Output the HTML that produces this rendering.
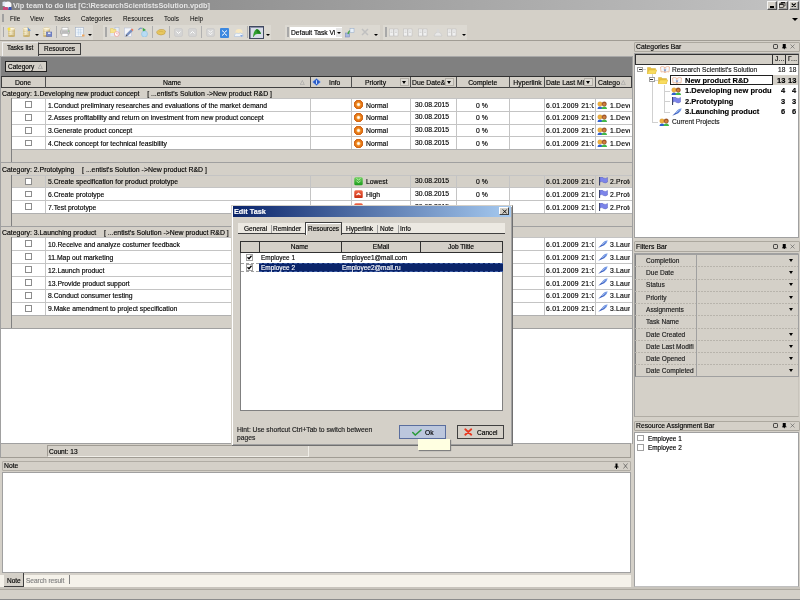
<!DOCTYPE html><html><head><meta charset="utf-8"><style>
html,body{margin:0;padding:0;width:800px;height:600px;overflow:hidden;background:#d4d0c8;}
body{position:relative;font-family:"Liberation Sans",sans-serif;font-size:6.8px;color:#000;}
div{position:absolute;box-sizing:border-box;}
.t{white-space:nowrap;line-height:8px;height:8px;transform:translateY(-4px);will-change:transform;-webkit-text-stroke:0.15px currentColor;}
.cb{width:8px;height:8px;border:1px solid #8a8a8a;background:#fff;}
</style></head><body>
<div style="left:0px;top:0px;width:800px;height:10px;background:linear-gradient(to right,#7f7f7f,#c3c3c3);"></div>
<svg style="position:absolute;left:1px;top:0.5px;" width="11" height="9.5" viewBox="0 0 22 19"><path d="M3 2 Q7 0 11 2 L11 10 L3 10Z" fill="#dde6f4"/><ellipse cx="14" cy="8" rx="7" ry="7" fill="#f6f6fa"/><rect x="4" y="12" width="10" height="7" rx="1" fill="#c84878"/><rect x="15" y="12" width="6" height="7" rx="1" fill="#3850b0"/></svg>
<div class="t" style="left:12.5px;top:5.6px;font-weight:bold;font-size:7.36px;color:#e4e4e4;-webkit-text-stroke:0;">Vip team to do list [C:\ResearchScientistsSolution.vpdb]</div>
<div style="left:767px;top:1px;width:10px;height:8.5px;background:#d4d0c8;border:1px solid;border-color:#f4f4f4 #505050 #505050 #f4f4f4;box-shadow:inset -1px -1px 0 #a0a0a0;"></div>
<div style="left:777.5px;top:1px;width:10px;height:8.5px;background:#d4d0c8;border:1px solid;border-color:#f4f4f4 #505050 #505050 #f4f4f4;box-shadow:inset -1px -1px 0 #a0a0a0;"></div>
<div style="left:788.5px;top:1px;width:10px;height:8.5px;background:#d4d0c8;border:1px solid;border-color:#f4f4f4 #505050 #505050 #f4f4f4;box-shadow:inset -1px -1px 0 #a0a0a0;"></div>
<div style="left:769.8px;top:6px;width:4px;height:1.5px;background:#000;"></div>
<svg style="position:absolute;left:778.8px;top:2.3px;" width="7" height="6" viewBox="0 0 14 12"><path d="M4 1h8v7h-2M4 1v2" stroke="#000" stroke-width="1.2" fill="none"/><path d="M4 0.5h8v2H4z" fill="#000"/><rect x="1" y="4" width="7.5" height="7" fill="#d4d0c8" stroke="#000" stroke-width="1.2"/><rect x="1" y="3.5" width="7.5" height="2" fill="#000"/></svg>
<svg style="position:absolute;left:790.6px;top:2.6px;" width="5.5" height="4.5" viewBox="0 0 11 9"><path d="M1.5 1L9.5 8M9.5 1L1.5 8" stroke="#000" stroke-width="2.2"/></svg>
<div style="left:2px;top:14px;width:1.5px;height:8px;background:#a0a0a0;"></div>
<div class="t" style="left:9.9px;top:19px;font-size:6.4px;-webkit-text-stroke:0;">File</div>
<div class="t" style="left:30px;top:19px;font-size:6.4px;-webkit-text-stroke:0;">View</div>
<div class="t" style="left:54px;top:19px;font-size:6.4px;-webkit-text-stroke:0;">Tasks</div>
<div class="t" style="left:80.5px;top:19px;font-size:6.4px;-webkit-text-stroke:0;">Categories</div>
<div class="t" style="left:122.7px;top:19px;font-size:6.4px;-webkit-text-stroke:0;">Resources</div>
<div class="t" style="left:164.4px;top:19px;font-size:6.4px;-webkit-text-stroke:0;">Tools</div>
<div class="t" style="left:189.7px;top:19px;font-size:6.4px;-webkit-text-stroke:0;">Help</div>
<div style="left:792px;top:18px;width:0;height:0;border-left:3px solid transparent;border-right:3px solid transparent;border-top:3px solid #000;"></div>
<div style="left:1px;top:24.5px;width:92px;height:15px;background:#dcd9d2;"></div>
<div style="left:103px;top:24.5px;width:168px;height:15px;background:#dcd9d2;"></div>
<div style="left:285px;top:24.5px;width:95px;height:15px;background:#dcd9d2;"></div>
<div style="left:383px;top:24.5px;width:84px;height:15px;background:#dcd9d2;"></div>
<div style="left:2.5px;top:27px;width:1.5px;height:10px;background:#a8a8a8;"></div>
<div style="left:105px;top:27px;width:1.5px;height:10px;background:#a8a8a8;"></div>
<div style="left:287px;top:27px;width:1.5px;height:10px;background:#a8a8a8;"></div>
<div style="left:385px;top:27px;width:1.5px;height:10px;background:#a8a8a8;"></div>
<div style="left:56px;top:26px;width:1px;height:12px;background:#b0b0b0;"></div>
<div style="left:152px;top:26px;width:1px;height:12px;background:#b0b0b0;"></div>
<div style="left:169px;top:26px;width:1px;height:12px;background:#b0b0b0;"></div>
<div style="left:201px;top:26px;width:1px;height:12px;background:#b0b0b0;"></div>
<div style="left:247px;top:26px;width:1px;height:12px;background:#b0b0b0;"></div>
<div style="left:35px;top:34.3px;width:0;height:0;border-left:2px solid transparent;border-right:2px solid transparent;border-top:2.5px solid #000;"></div>
<div style="left:88px;top:34.3px;width:0;height:0;border-left:2px solid transparent;border-right:2px solid transparent;border-top:2.5px solid #000;"></div>
<div style="left:266px;top:34.3px;width:0;height:0;border-left:2px solid transparent;border-right:2px solid transparent;border-top:2.5px solid #000;"></div>
<div style="left:374px;top:34.3px;width:0;height:0;border-left:2px solid transparent;border-right:2px solid transparent;border-top:2.5px solid #000;"></div>
<div style="left:461.5px;top:34.3px;width:0;height:0;border-left:2px solid transparent;border-right:2px solid transparent;border-top:2.5px solid #000;"></div>
<svg width="0" height="0" style="position:absolute"><defs><linearGradient id="cyl" x1="0" x2="1"><stop offset="0" stop-color="#d8c890"/><stop offset=".4" stop-color="#fbf5dc"/><stop offset="1" stop-color="#c8b070"/></linearGradient></defs></svg>
<svg style="position:absolute;left:7px;top:26.8px;" width="9" height="10" viewBox="0 0 18 20"><rect x="2" y="3" width="14" height="15" rx="1" fill="url(#cyl)"/><ellipse cx="9" cy="3.5" rx="7" ry="2.5" fill="#fff8e0" stroke="#c8b070" stroke-width=".8"/><path d="M2 8.5 Q9 11 16 8.5 M2 13 Q9 15.5 16 13" stroke="#c8b480" stroke-width="1" fill="none"/><ellipse cx="9" cy="18" rx="7" ry="2" fill="#c8b070"/><circle cx="4" cy="4" r="3" fill="#f8e040"/></svg>
<svg style="position:absolute;left:22px;top:26.8px;" width="9" height="10" viewBox="0 0 18 20"><rect x="2" y="3" width="14" height="15" rx="1" fill="url(#cyl)"/><ellipse cx="9" cy="3.5" rx="7" ry="2.5" fill="#fff8e0" stroke="#c8b070" stroke-width=".8"/><path d="M2 8.5 Q9 11 16 8.5 M2 13 Q9 15.5 16 13" stroke="#c8b480" stroke-width="1" fill="none"/><ellipse cx="9" cy="18" rx="7" ry="2" fill="#c8b070"/><path d="M11 0 L18 7 L12 8 Z" fill="#6890d0"/></svg>
<svg style="position:absolute;left:42px;top:26.8px;" width="10" height="10" viewBox="0 0 20 20"><rect x="2" y="3" width="14" height="15" rx="1" fill="url(#cyl)"/><ellipse cx="9" cy="3.5" rx="7" ry="2.5" fill="#fff8e0" stroke="#c8b070" stroke-width=".8"/><path d="M2 8.5 Q9 11 16 8.5 M2 13 Q9 15.5 16 13" stroke="#c8b480" stroke-width="1" fill="none"/><ellipse cx="9" cy="18" rx="7" ry="2" fill="#c8b070"/><rect x="9" y="10" width="11" height="9" fill="#7888c8" stroke="#5060a8" stroke-width="1"/><rect x="12" y="11" width="5" height="3" fill="#e8ecf8"/></svg>
<svg style="position:absolute;left:59.5px;top:27px;" width="10" height="10" viewBox="0 0 20 20"><rect x="4" y="1" width="12" height="6" fill="#fff" stroke="#a8a8a8" stroke-width="1"/><rect x="1" y="6" width="18" height="8" rx="2" fill="#d8d8d8" stroke="#909090" stroke-width="1"/><rect x="3" y="9" width="14" height="2" fill="#a0a0a0"/><rect x="4" y="13" width="12" height="6" fill="#fff" stroke="#a8a8a8" stroke-width="1"/><circle cx="17" cy="8" r="1" fill="#60c060"/></svg>
<svg style="position:absolute;left:75px;top:27px;" width="10" height="10" viewBox="0 0 20 20"><rect x="1" y="1" width="16" height="18" fill="#f4f8fc" stroke="#98a8c0" stroke-width="1"/><path d="M3 5h12M3 8h12M3 11h12M3 14h12M7 3v14M11 3v14" stroke="#b8d0e8" stroke-width="1"/><rect x="14" y="15" width="5" height="4" fill="#f0a860"/></svg>
<svg style="position:absolute;left:109.6px;top:27px;" width="10" height="10" viewBox="0 0 20 20"><rect x="10" y="1" width="8" height="14" fill="#e8eef8" stroke="#a8b8d0" stroke-width="1"/><path d="M1 3h5l1 2h5v7H1z" fill="#f8e48a" stroke="#e0c860" stroke-width="1"/><rect x="1" y="12" width="8" height="6" fill="#e4e8f0"/><circle cx="13.5" cy="14" r="4.8" fill="#fff" stroke="#f08888" stroke-width="1.2"/><path d="M13.5 11v3h2" stroke="#e07070" stroke-width="1" fill="none"/></svg>
<svg style="position:absolute;left:123.6px;top:27px;" width="10" height="10" viewBox="0 0 20 20"><rect x="1" y="2" width="14" height="17" fill="#f4f6fa" stroke="#b0bcd8" stroke-width="1"/><path d="M4 15 L14 5 L17 8 L7 18 Z" fill="#7890c0" stroke="#5870a8" stroke-width=".6"/><path d="M14 5 L16 3 L19 6 L17 8Z" fill="#f07050"/><path d="M4 15l-1 4 4-1z" fill="#404040"/></svg>
<svg style="position:absolute;left:137.7px;top:27px;" width="10" height="10" viewBox="0 0 20 20"><path d="M1 6 Q4 1 8 3" stroke="#7898c8" stroke-width="2.5" fill="none"/><path d="M9 1 L16 6 L10 10 Z" fill="#40a848"/><circle cx="13" cy="14" r="6" fill="#b8dcf4" stroke="#80b8e0" stroke-width="1"/></svg>
<svg style="position:absolute;left:156px;top:28px;" width="10" height="8" viewBox="0 0 20 16"><path d="M1 8 Q5 2 10 3 Q16 2 19 6 L17 12 Q10 16 3 12 Z" fill="#e8c860" stroke="#b89030" stroke-width="1"/><path d="M5 8 Q10 5 15 8" stroke="#c8a040" stroke-width="1" fill="none"/></svg>
<svg style="position:absolute;left:173.5px;top:28px;" width="9" height="9" viewBox="0 0 18 18"><rect x="1" y="1" width="16" height="16" rx="3" fill="#d4d4d4" stroke="#c4c4c4"/><path d="M5 7 L9 11 L13 7" stroke="#fff" stroke-width="2" fill="none"/></svg>
<svg style="position:absolute;left:187.5px;top:28px;" width="9" height="9" viewBox="0 0 18 18"><rect x="1" y="1" width="16" height="16" rx="3" fill="#d4d4d4" stroke="#c4c4c4"/><path d="M5 11 L9 7 L13 11" stroke="#fff" stroke-width="2" fill="none"/></svg>
<svg style="position:absolute;left:206px;top:28px;" width="9" height="9" viewBox="0 0 18 18"><rect x="1" y="1" width="16" height="16" rx="3" fill="#d4d4d4" stroke="#c4c4c4"/><path d="M5 5 L9 8 L13 5 M5 10 L9 13 L13 10" stroke="#fff" stroke-width="1.8" fill="none"/></svg>
<svg style="position:absolute;left:220px;top:27.5px;" width="9" height="10" viewBox="0 0 18 20"><rect x="0" y="0" width="18" height="20" rx="2" fill="#3c88e0"/><path d="M4 5 L9 9 L14 5 M4 15 L9 11 L14 15" stroke="#fff" stroke-width="2" fill="none"/></svg>
<svg style="position:absolute;left:234px;top:28px;" width="10" height="9" viewBox="0 0 20 18"><ellipse cx="10" cy="8" rx="7" ry="6" fill="#f8e8c0"/><path d="M1 14 Q4 8 9 11 Q14 8 18 13 L18 17 L1 17 Z" fill="#eef4fa" stroke="#a0b8d8" stroke-width="1"/><path d="M12 14 h6 l-3 4z" fill="#88a8e0"/></svg>
<div style="left:249px;top:26.4px;width:14.6px;height:12.2px;background:#d8dce8;border:1px solid #404860;box-shadow:inset 1px 1px 0 #8890a8;"></div>
<svg style="position:absolute;left:251.5px;top:28px;" width="10" height="9" viewBox="0 0 20 18"><path d="M2 18 Q3 6 8 3 Q14 1 18 12 L10 12 Q6 12 3 18 Z" fill="#30a030"/><path d="M8 3 Q14 1 18 12 L11 10 Z" fill="#208020"/></svg>
<div style="left:289.5px;top:27.3px;width:52.5px;height:10.5px;background:#fff;"></div>
<div class="t" style="left:291px;top:32.5px;font-size:6.7px;">Default Task Vi</div>
<div style="left:335.5px;top:28px;width:6px;height:9px;background:#e8e8e8;"></div>
<div style="left:337px;top:32px;width:0;height:0;border-left:2px solid transparent;border-right:2px solid transparent;border-top:2.5px solid #000;"></div>
<svg style="position:absolute;left:345px;top:27.5px;" width="10" height="10" viewBox="0 0 20 20"><rect x="1" y="10" width="8" height="8" fill="#a8b8e0" stroke="#7080b8"/><path d="M6 12 Q8 4 16 4" stroke="#48a848" stroke-width="3" fill="none"/><rect x="10" y="1" width="8" height="8" fill="#e8f0f8" stroke="#90a8c8"/></svg>
<svg style="position:absolute;left:360.5px;top:28px;" width="8" height="8" viewBox="0 0 16 16"><path d="M2 2 L14 14 M14 2 L2 14" stroke="#c0c0c0" stroke-width="3"/></svg>
<svg style="position:absolute;left:389.4px;top:28px;" width="10" height="9" viewBox="0 0 20 18"><rect x="1" y="2" width="8" height="14" fill="#f0f0f0" stroke="#b8b8b8"/><rect x="10" y="2" width="8" height="14" fill="#f0f0f0" stroke="#b8b8b8"/><path d="M3 6h4M3 9h4M12 6h4M12 9h4" stroke="#c0c0c0"/></svg>
<svg style="position:absolute;left:403.4px;top:28px;" width="10" height="9" viewBox="0 0 20 18"><rect x="1" y="2" width="8" height="14" fill="#f0f0f0" stroke="#b8b8b8"/><rect x="10" y="2" width="8" height="14" fill="#f0f0f0" stroke="#b8b8b8"/><path d="M3 6h4M3 9h4M12 6h4M12 9h4" stroke="#c0c0c0"/></svg>
<svg style="position:absolute;left:418px;top:28px;" width="10" height="9" viewBox="0 0 20 18"><rect x="1" y="2" width="8" height="14" fill="#f0f0f0" stroke="#b8b8b8"/><rect x="10" y="2" width="8" height="14" fill="#f0f0f0" stroke="#b8b8b8"/><path d="M3 6h4M3 9h4M12 6h4M12 9h4" stroke="#c0c0c0"/></svg>
<svg style="position:absolute;left:447px;top:28px;" width="10" height="9" viewBox="0 0 20 18"><rect x="1" y="2" width="8" height="14" fill="#f0f0f0" stroke="#b8b8b8"/><rect x="10" y="2" width="8" height="14" fill="#f0f0f0" stroke="#b8b8b8"/><path d="M3 6h4M3 9h4M12 6h4M12 9h4" stroke="#c0c0c0"/></svg>
<svg style="position:absolute;left:433px;top:28px;" width="10" height="9" viewBox="0 0 20 18"><path d="M2 16 Q4 8 10 8 Q16 8 18 16 Z" fill="#e8e8e8" stroke="#c0c0c0"/><path d="M8 2 L12 2 L13 8 L7 8 Z" fill="#d8d8d8"/></svg>
<div style="left:0px;top:40px;width:800px;height:1px;background:#a09c94;"></div>
<div style="left:39.4px;top:43px;width:41.6px;height:11.8px;background:#d4d0c8;border:1px solid #404040;border-left:none;"></div>
<div class="t" style="left:43.9px;top:49.2px;font-size:6.5px;">Resources</div>
<div style="left:2.25px;top:42px;width:37.2px;height:14px;background:#d4d0c8;border-left:1px solid #f0f0f0;border-top:1px solid #e8e8e8;border-right:1px solid #404040;"></div>
<div class="t" style="left:6.7px;top:48px;font-size:6.5px;">Tasks list</div>
<div style="left:0px;top:56px;width:1.2px;height:402px;background:#a0a0a0;"></div>
<div style="left:1px;top:56px;width:630.7px;height:20px;background:#808080;border-top:1px solid #a8a8a8;"></div>
<div style="left:5.4px;top:61px;width:42.1px;height:10.7px;background:#d4d0c8;border:1px solid #202020;"></div>
<div class="t" style="left:7.5px;top:66.5px;font-size:6.5px;">Category</div>
<div class="t" style="left:38px;top:66.3px;font-size:6px;color:#909090;">&#9651;</div>
<div style="left:1px;top:88px;width:630.7px;height:355.3px;background:#fff;"></div>
<div style="left:1px;top:76px;width:630.7px;height:12px;background:#d4d0c8;border:1px solid #404040;border-top-color:#303030;"></div>
<div style="left:44.5px;top:77px;width:1px;height:11px;background:#505050;"></div>
<div style="left:309.9px;top:77px;width:1px;height:11px;background:#505050;"></div>
<div style="left:351.1px;top:77px;width:1px;height:11px;background:#505050;"></div>
<div style="left:410.1px;top:77px;width:1px;height:11px;background:#505050;"></div>
<div style="left:455.5px;top:77px;width:1px;height:11px;background:#505050;"></div>
<div style="left:509.0px;top:77px;width:1px;height:11px;background:#505050;"></div>
<div style="left:544.0px;top:77px;width:1px;height:11px;background:#505050;"></div>
<div style="left:595.0px;top:77px;width:1px;height:11px;background:#505050;"></div>
<div class="t" style="left:1px;top:82.5px;width:44px;text-align:center;">Done</div>
<div class="t" style="left:162.5px;top:82.5px;">Name</div>
<div class="t" style="left:329.4px;top:82.5px;">Info</div>
<div class="t" style="left:364.7px;top:82.5px;">Priority</div>
<div class="t" style="left:411.8px;top:82.5px;">Due Date&amp;</div>
<div class="t" style="left:456px;top:82.5px;width:53.5px;text-align:center;">Complete</div>
<div class="t" style="left:509.5px;top:82.5px;width:35.0px;text-align:center;">Hyperlink</div>
<div class="t" style="left:545.7px;top:82.5px;">Date Last Mi</div>
<div class="t" style="left:597.5px;top:82.5px;">Catego</div>
<div style="left:399.5px;top:78px;width:9px;height:7.6px;background:#dcd9d2;border:1px solid #b4b0a8;"></div>
<div style="left:401.5px;top:80.8px;width:0;height:0;border-left:2.5px solid transparent;border-right:2.5px solid transparent;border-top:3px solid #000;"></div>
<div style="left:445.4px;top:78px;width:9px;height:7.6px;background:#dcd9d2;border:1px solid #b4b0a8;"></div>
<div style="left:447.4px;top:80.8px;width:0;height:0;border-left:2.5px solid transparent;border-right:2.5px solid transparent;border-top:3px solid #000;"></div>
<div style="left:584px;top:78px;width:9px;height:7.6px;background:#dcd9d2;border:1px solid #b4b0a8;"></div>
<div style="left:586px;top:80.8px;width:0;height:0;border-left:2.5px solid transparent;border-right:2.5px solid transparent;border-top:3px solid #000;"></div>
<div class="t" style="left:300px;top:82px;font-size:6px;color:#a0a0a0;">&#9651;</div>
<div class="t" style="left:621px;top:82px;font-size:6px;color:#a0a0a0;">&#9651;</div>
<svg style="position:absolute;left:312.3px;top:78.4px;" width="9" height="8" viewBox="0 0 18 16"><path d="M9 0.5 L17.5 8 L9 15.5 L0.5 8Z" fill="#2a5cc8" stroke="#c8dcf8" stroke-width="1"/><rect x="8" y="4" width="2" height="8" rx="1" fill="#c8dcff"/></svg>
<div style="left:1px;top:87.8px;width:630.7px;height:10.200000000000003px;background:#d4d0c8;"></div>
<div class="t" style="left:2.25px;top:93.9px;font-size:6.9px;">Category: 1.Developing new product concept &nbsp;&nbsp; [ ...entist's Solution -&gt;New product R&amp;D ]</div>
<div style="left:12px;top:98.0px;width:619.7px;height:12.825000000000003px;background:#fff;border-top:1px solid #c4c4c4;"></div>
<div style="left:44.5px;top:98.0px;width:1px;height:12.825000000000003px;background:#c4c4c4;"></div>
<div style="left:309.9px;top:98.0px;width:1px;height:12.825000000000003px;background:#c4c4c4;"></div>
<div style="left:351.1px;top:98.0px;width:1px;height:12.825000000000003px;background:#c4c4c4;"></div>
<div style="left:410.1px;top:98.0px;width:1px;height:12.825000000000003px;background:#c4c4c4;"></div>
<div style="left:455.5px;top:98.0px;width:1px;height:12.825000000000003px;background:#c4c4c4;"></div>
<div style="left:509.0px;top:98.0px;width:1px;height:12.825000000000003px;background:#c4c4c4;"></div>
<div style="left:544.0px;top:98.0px;width:1px;height:12.825000000000003px;background:#c4c4c4;"></div>
<div style="left:595.0px;top:98.0px;width:1px;height:12.825000000000003px;background:#c4c4c4;"></div>
<div style="left:25px;top:101.1125px;width:6.9px;height:6.9px;background:#fff;border:1px solid #8c8c8c;"></div>
<div class="t" style="left:47.5px;top:105.51249999999999px;">1.Conduct preliminary researches and evaluations of the market demand</div>
<div style="left:354px;top:100.4125px;width:9px;height:9px;background:radial-gradient(circle,#fff 0,#ffe8c8 18%,#f08a20 35%,#d06010 70%,transparent 72%);"></div>
<div class="t" style="left:366px;top:105.51249999999999px;">Normal</div>
<div class="t" style="left:415px;top:104.51249999999999px;">30.08.2015</div>
<div class="t" style="left:476px;top:105.51249999999999px;">0 %</div>
<div class="t" style="left:546px;top:105.51249999999999px;width:47.5px;overflow:hidden;letter-spacing:0.3px;">6.01.2009 21:05</div>
<svg style="position:absolute;left:597px;top:100.9125px;" width="11" height="8" viewBox="0 0 22 16"><path d="M1 16 Q1 11 6 11 Q11 11 11 16Z" fill="#2f5fd0"/><circle cx="6" cy="6" r="4.6" fill="#eeb040" stroke="#c88820" stroke-width=".6"/><path d="M9 16 Q9 11 14.5 11 Q20 11 20 16Z" fill="#40b848"/><circle cx="14.5" cy="6" r="4.6" fill="#a85a28" stroke="#703010" stroke-width=".6"/><circle cx="14.5" cy="6.8" r="2.6" fill="#d08040"/></svg>
<div class="t" style="left:610px;top:105.51249999999999px;width:20px;overflow:hidden;letter-spacing:0.2px;">1.Developing</div>
<div style="left:12px;top:110.825px;width:619.7px;height:12.825000000000003px;background:#fff;border-top:1px solid #c4c4c4;"></div>
<div style="left:44.5px;top:110.825px;width:1px;height:12.825000000000003px;background:#c4c4c4;"></div>
<div style="left:309.9px;top:110.825px;width:1px;height:12.825000000000003px;background:#c4c4c4;"></div>
<div style="left:351.1px;top:110.825px;width:1px;height:12.825000000000003px;background:#c4c4c4;"></div>
<div style="left:410.1px;top:110.825px;width:1px;height:12.825000000000003px;background:#c4c4c4;"></div>
<div style="left:455.5px;top:110.825px;width:1px;height:12.825000000000003px;background:#c4c4c4;"></div>
<div style="left:509.0px;top:110.825px;width:1px;height:12.825000000000003px;background:#c4c4c4;"></div>
<div style="left:544.0px;top:110.825px;width:1px;height:12.825000000000003px;background:#c4c4c4;"></div>
<div style="left:595.0px;top:110.825px;width:1px;height:12.825000000000003px;background:#c4c4c4;"></div>
<div style="left:25px;top:113.93750000000001px;width:6.9px;height:6.9px;background:#fff;border:1px solid #8c8c8c;"></div>
<div class="t" style="left:47.5px;top:118.3375px;">2.Asses profitability and return on investment from new product concept</div>
<div style="left:354px;top:113.23750000000001px;width:9px;height:9px;background:radial-gradient(circle,#fff 0,#ffe8c8 18%,#f08a20 35%,#d06010 70%,transparent 72%);"></div>
<div class="t" style="left:366px;top:118.3375px;">Normal</div>
<div class="t" style="left:415px;top:117.3375px;">30.08.2015</div>
<div class="t" style="left:476px;top:118.3375px;">0 %</div>
<div class="t" style="left:546px;top:118.3375px;width:47.5px;overflow:hidden;letter-spacing:0.3px;">6.01.2009 21:05</div>
<svg style="position:absolute;left:597px;top:113.73750000000001px;" width="11" height="8" viewBox="0 0 22 16"><path d="M1 16 Q1 11 6 11 Q11 11 11 16Z" fill="#2f5fd0"/><circle cx="6" cy="6" r="4.6" fill="#eeb040" stroke="#c88820" stroke-width=".6"/><path d="M9 16 Q9 11 14.5 11 Q20 11 20 16Z" fill="#40b848"/><circle cx="14.5" cy="6" r="4.6" fill="#a85a28" stroke="#703010" stroke-width=".6"/><circle cx="14.5" cy="6.8" r="2.6" fill="#d08040"/></svg>
<div class="t" style="left:610px;top:118.3375px;width:20px;overflow:hidden;letter-spacing:0.2px;">1.Developing</div>
<div style="left:12px;top:123.65px;width:619.7px;height:12.825000000000003px;background:#fff;border-top:1px solid #c4c4c4;"></div>
<div style="left:44.5px;top:123.65px;width:1px;height:12.825000000000003px;background:#c4c4c4;"></div>
<div style="left:309.9px;top:123.65px;width:1px;height:12.825000000000003px;background:#c4c4c4;"></div>
<div style="left:351.1px;top:123.65px;width:1px;height:12.825000000000003px;background:#c4c4c4;"></div>
<div style="left:410.1px;top:123.65px;width:1px;height:12.825000000000003px;background:#c4c4c4;"></div>
<div style="left:455.5px;top:123.65px;width:1px;height:12.825000000000003px;background:#c4c4c4;"></div>
<div style="left:509.0px;top:123.65px;width:1px;height:12.825000000000003px;background:#c4c4c4;"></div>
<div style="left:544.0px;top:123.65px;width:1px;height:12.825000000000003px;background:#c4c4c4;"></div>
<div style="left:595.0px;top:123.65px;width:1px;height:12.825000000000003px;background:#c4c4c4;"></div>
<div style="left:25px;top:126.7625px;width:6.9px;height:6.9px;background:#fff;border:1px solid #8c8c8c;"></div>
<div class="t" style="left:47.5px;top:131.1625px;">3.Generate product concept</div>
<div style="left:354px;top:126.0625px;width:9px;height:9px;background:radial-gradient(circle,#fff 0,#ffe8c8 18%,#f08a20 35%,#d06010 70%,transparent 72%);"></div>
<div class="t" style="left:366px;top:131.1625px;">Normal</div>
<div class="t" style="left:415px;top:130.1625px;">30.08.2015</div>
<div class="t" style="left:476px;top:131.1625px;">0 %</div>
<div class="t" style="left:546px;top:131.1625px;width:47.5px;overflow:hidden;letter-spacing:0.3px;">6.01.2009 21:05</div>
<svg style="position:absolute;left:597px;top:126.5625px;" width="11" height="8" viewBox="0 0 22 16"><path d="M1 16 Q1 11 6 11 Q11 11 11 16Z" fill="#2f5fd0"/><circle cx="6" cy="6" r="4.6" fill="#eeb040" stroke="#c88820" stroke-width=".6"/><path d="M9 16 Q9 11 14.5 11 Q20 11 20 16Z" fill="#40b848"/><circle cx="14.5" cy="6" r="4.6" fill="#a85a28" stroke="#703010" stroke-width=".6"/><circle cx="14.5" cy="6.8" r="2.6" fill="#d08040"/></svg>
<div class="t" style="left:610px;top:131.1625px;width:20px;overflow:hidden;letter-spacing:0.2px;">1.Developing</div>
<div style="left:12px;top:136.47500000000002px;width:619.7px;height:12.825000000000003px;background:#fff;border-top:1px solid #c4c4c4;"></div>
<div style="left:44.5px;top:136.47500000000002px;width:1px;height:12.825000000000003px;background:#c4c4c4;"></div>
<div style="left:309.9px;top:136.47500000000002px;width:1px;height:12.825000000000003px;background:#c4c4c4;"></div>
<div style="left:351.1px;top:136.47500000000002px;width:1px;height:12.825000000000003px;background:#c4c4c4;"></div>
<div style="left:410.1px;top:136.47500000000002px;width:1px;height:12.825000000000003px;background:#c4c4c4;"></div>
<div style="left:455.5px;top:136.47500000000002px;width:1px;height:12.825000000000003px;background:#c4c4c4;"></div>
<div style="left:509.0px;top:136.47500000000002px;width:1px;height:12.825000000000003px;background:#c4c4c4;"></div>
<div style="left:544.0px;top:136.47500000000002px;width:1px;height:12.825000000000003px;background:#c4c4c4;"></div>
<div style="left:595.0px;top:136.47500000000002px;width:1px;height:12.825000000000003px;background:#c4c4c4;"></div>
<div style="left:25px;top:139.5875px;width:6.9px;height:6.9px;background:#fff;border:1px solid #8c8c8c;"></div>
<div class="t" style="left:47.5px;top:143.9875px;">4.Check concept for technical feasibility</div>
<div style="left:354px;top:138.88750000000002px;width:9px;height:9px;background:radial-gradient(circle,#fff 0,#ffe8c8 18%,#f08a20 35%,#d06010 70%,transparent 72%);"></div>
<div class="t" style="left:366px;top:143.9875px;">Normal</div>
<div class="t" style="left:415px;top:142.9875px;">30.08.2015</div>
<div class="t" style="left:476px;top:143.9875px;">0 %</div>
<div class="t" style="left:546px;top:143.9875px;width:47.5px;overflow:hidden;letter-spacing:0.3px;">6.01.2009 21:05</div>
<svg style="position:absolute;left:597px;top:139.38750000000002px;" width="11" height="8" viewBox="0 0 22 16"><path d="M1 16 Q1 11 6 11 Q11 11 11 16Z" fill="#2f5fd0"/><circle cx="6" cy="6" r="4.6" fill="#eeb040" stroke="#c88820" stroke-width=".6"/><path d="M9 16 Q9 11 14.5 11 Q20 11 20 16Z" fill="#40b848"/><circle cx="14.5" cy="6" r="4.6" fill="#a85a28" stroke="#703010" stroke-width=".6"/><circle cx="14.5" cy="6.8" r="2.6" fill="#d08040"/></svg>
<div class="t" style="left:610px;top:143.9875px;width:20px;overflow:hidden;letter-spacing:0.2px;">1.Developing</div>
<div style="left:1px;top:149.3px;width:630.7px;height:14.0px;background:#d4d0c8;border-top:1px solid #b0b0b0;border-bottom:1px solid #a0a0a0;"></div>
<div style="left:11.2px;top:98.0px;width:1px;height:64.30000000000001px;background:#808080;"></div>
<div style="left:1px;top:98.0px;width:10.2px;height:64.30000000000001px;background:#d4d0c8;"></div>
<div style="left:1px;top:163.3px;width:630.7px;height:11.399999999999977px;background:#d4d0c8;"></div>
<div class="t" style="left:2.25px;top:170.0px;font-size:6.9px;">Category: 2.Prototyping &nbsp;&nbsp; [ ...entist's Solution -&gt;New product R&amp;D ]</div>
<div style="left:12px;top:174.7px;width:619.7px;height:12.766666666666671px;background:#d4d0c8;border-top:1px solid #c4c4c4;"></div>
<div style="left:44.5px;top:174.7px;width:1px;height:12.766666666666671px;background:#c4c4c4;"></div>
<div style="left:309.9px;top:174.7px;width:1px;height:12.766666666666671px;background:#c4c4c4;"></div>
<div style="left:351.1px;top:174.7px;width:1px;height:12.766666666666671px;background:#c4c4c4;"></div>
<div style="left:410.1px;top:174.7px;width:1px;height:12.766666666666671px;background:#c4c4c4;"></div>
<div style="left:455.5px;top:174.7px;width:1px;height:12.766666666666671px;background:#c4c4c4;"></div>
<div style="left:509.0px;top:174.7px;width:1px;height:12.766666666666671px;background:#c4c4c4;"></div>
<div style="left:544.0px;top:174.7px;width:1px;height:12.766666666666671px;background:#c4c4c4;"></div>
<div style="left:595.0px;top:174.7px;width:1px;height:12.766666666666671px;background:#c4c4c4;"></div>
<div style="left:25px;top:177.7833333333333px;width:6.9px;height:6.9px;background:#fff;border:1px solid #8c8c8c;"></div>
<div class="t" style="left:47.5px;top:182.1833333333333px;">5.Create specification for product prototype</div>
<svg style="position:absolute;left:354px;top:177.08333333333331px;" width="9" height="8.5" viewBox="0 0 18 17"><defs><linearGradient id="gl" x1="0" y1="0" x2="0" y2="1"><stop offset="0" stop-color="#70d060"/><stop offset="1" stop-color="#1c9c1c"/></linearGradient></defs><rect x="0.5" y="0.5" width="17" height="16" rx="3" fill="url(#gl)"/><path d="M5 3 L9 6 L13 3 M5 8 L9 11 L13 8" stroke="#c8f8b8" stroke-width="1.8" fill="none"/></svg>
<div class="t" style="left:366px;top:182.1833333333333px;">Lowest</div>
<div class="t" style="left:415px;top:181.1833333333333px;">30.08.2015</div>
<div class="t" style="left:476px;top:182.1833333333333px;">0 %</div>
<div class="t" style="left:546px;top:182.1833333333333px;width:47.5px;overflow:hidden;letter-spacing:0.3px;">6.01.2009 21:05</div>
<svg style="position:absolute;left:598.5px;top:177.08333333333331px;" width="9" height="8.5" viewBox="0 0 18 17"><rect x="0" y="0" width="2.2" height="17" fill="#3c4468"/><path d="M2 1 Q6 -1 9 2 Q13 4 17 1 V10 Q13 13 9 11 Q6 8 2 10 Z" fill="#7c84ea" stroke="#4850b0" stroke-width=".8"/></svg>
<div class="t" style="left:610px;top:182.1833333333333px;width:20px;overflow:hidden;letter-spacing:0.2px;">2.Prototyping</div>
<div style="left:12px;top:187.46666666666667px;width:619.7px;height:12.766666666666671px;background:#fff;border-top:1px solid #c4c4c4;"></div>
<div style="left:44.5px;top:187.46666666666667px;width:1px;height:12.766666666666671px;background:#c4c4c4;"></div>
<div style="left:309.9px;top:187.46666666666667px;width:1px;height:12.766666666666671px;background:#c4c4c4;"></div>
<div style="left:351.1px;top:187.46666666666667px;width:1px;height:12.766666666666671px;background:#c4c4c4;"></div>
<div style="left:410.1px;top:187.46666666666667px;width:1px;height:12.766666666666671px;background:#c4c4c4;"></div>
<div style="left:455.5px;top:187.46666666666667px;width:1px;height:12.766666666666671px;background:#c4c4c4;"></div>
<div style="left:509.0px;top:187.46666666666667px;width:1px;height:12.766666666666671px;background:#c4c4c4;"></div>
<div style="left:544.0px;top:187.46666666666667px;width:1px;height:12.766666666666671px;background:#c4c4c4;"></div>
<div style="left:595.0px;top:187.46666666666667px;width:1px;height:12.766666666666671px;background:#c4c4c4;"></div>
<div style="left:25px;top:190.54999999999998px;width:6.9px;height:6.9px;background:#fff;border:1px solid #8c8c8c;"></div>
<div class="t" style="left:47.5px;top:194.95px;">6.Create prototype</div>
<svg style="position:absolute;left:354px;top:189.85px;" width="9" height="8.5" viewBox="0 0 18 17"><defs><linearGradient id="rh" x1="0" y1="0" x2="0" y2="1"><stop offset="0" stop-color="#f06848"/><stop offset="1" stop-color="#c82c10"/></linearGradient></defs><rect x="0.5" y="0.5" width="17" height="16" rx="3" fill="url(#rh)"/><path d="M5 10 L9 6.5 L13 10" stroke="#fff" stroke-width="2.2" fill="none"/></svg>
<div class="t" style="left:366px;top:194.95px;">High</div>
<div class="t" style="left:415px;top:193.95px;">30.08.2015</div>
<div class="t" style="left:476px;top:194.95px;">0 %</div>
<div class="t" style="left:546px;top:194.95px;width:47.5px;overflow:hidden;letter-spacing:0.3px;">6.01.2009 21:05</div>
<svg style="position:absolute;left:598.5px;top:189.85px;" width="9" height="8.5" viewBox="0 0 18 17"><rect x="0" y="0" width="2.2" height="17" fill="#3c4468"/><path d="M2 1 Q6 -1 9 2 Q13 4 17 1 V10 Q13 13 9 11 Q6 8 2 10 Z" fill="#7c84ea" stroke="#4850b0" stroke-width=".8"/></svg>
<div class="t" style="left:610px;top:194.95px;width:20px;overflow:hidden;letter-spacing:0.2px;">2.Prototyping</div>
<div style="left:12px;top:200.23333333333332px;width:619.7px;height:12.766666666666671px;background:#fff;border-top:1px solid #c4c4c4;"></div>
<div style="left:44.5px;top:200.23333333333332px;width:1px;height:12.766666666666671px;background:#c4c4c4;"></div>
<div style="left:309.9px;top:200.23333333333332px;width:1px;height:12.766666666666671px;background:#c4c4c4;"></div>
<div style="left:351.1px;top:200.23333333333332px;width:1px;height:12.766666666666671px;background:#c4c4c4;"></div>
<div style="left:410.1px;top:200.23333333333332px;width:1px;height:12.766666666666671px;background:#c4c4c4;"></div>
<div style="left:455.5px;top:200.23333333333332px;width:1px;height:12.766666666666671px;background:#c4c4c4;"></div>
<div style="left:509.0px;top:200.23333333333332px;width:1px;height:12.766666666666671px;background:#c4c4c4;"></div>
<div style="left:544.0px;top:200.23333333333332px;width:1px;height:12.766666666666671px;background:#c4c4c4;"></div>
<div style="left:595.0px;top:200.23333333333332px;width:1px;height:12.766666666666671px;background:#c4c4c4;"></div>
<div style="left:25px;top:203.31666666666663px;width:6.9px;height:6.9px;background:#fff;border:1px solid #8c8c8c;"></div>
<div class="t" style="left:47.5px;top:207.71666666666664px;">7.Test prototype</div>
<svg style="position:absolute;left:354px;top:202.61666666666665px;" width="9" height="8.5" viewBox="0 0 18 17"><defs><linearGradient id="rh" x1="0" y1="0" x2="0" y2="1"><stop offset="0" stop-color="#f06848"/><stop offset="1" stop-color="#c82c10"/></linearGradient></defs><rect x="0.5" y="0.5" width="17" height="16" rx="3" fill="url(#rh)"/><path d="M5 10 L9 6.5 L13 10" stroke="#fff" stroke-width="2.2" fill="none"/></svg>
<div class="t" style="left:366px;top:207.71666666666664px;">High</div>
<div class="t" style="left:415px;top:206.71666666666664px;">30.08.2015</div>
<div class="t" style="left:476px;top:207.71666666666664px;">0 %</div>
<div class="t" style="left:546px;top:207.71666666666664px;width:47.5px;overflow:hidden;letter-spacing:0.3px;">6.01.2009 21:05</div>
<svg style="position:absolute;left:598.5px;top:202.61666666666665px;" width="9" height="8.5" viewBox="0 0 18 17"><rect x="0" y="0" width="2.2" height="17" fill="#3c4468"/><path d="M2 1 Q6 -1 9 2 Q13 4 17 1 V10 Q13 13 9 11 Q6 8 2 10 Z" fill="#7c84ea" stroke="#4850b0" stroke-width=".8"/></svg>
<div class="t" style="left:610px;top:207.71666666666664px;width:20px;overflow:hidden;letter-spacing:0.2px;">2.Prototyping</div>
<div style="left:1px;top:213.0px;width:630.7px;height:13.699999999999989px;background:#d4d0c8;border-top:1px solid #b0b0b0;border-bottom:1px solid #a0a0a0;"></div>
<div style="left:11.2px;top:174.7px;width:1px;height:51.0px;background:#808080;"></div>
<div style="left:1px;top:174.7px;width:10.2px;height:51.0px;background:#d4d0c8;"></div>
<div style="left:1px;top:226.7px;width:630.7px;height:10.600000000000023px;background:#d4d0c8;"></div>
<div class="t" style="left:2.25px;top:233.0px;font-size:6.9px;">Category: 3.Launching product &nbsp;&nbsp; [ ...entist's Solution -&gt;New product R&amp;D ]</div>
<div style="left:12px;top:237.3px;width:619.7px;height:12.899999999999997px;background:#fff;border-top:1px solid #c4c4c4;"></div>
<div style="left:44.5px;top:237.3px;width:1px;height:12.899999999999997px;background:#c4c4c4;"></div>
<div style="left:309.9px;top:237.3px;width:1px;height:12.899999999999997px;background:#c4c4c4;"></div>
<div style="left:351.1px;top:237.3px;width:1px;height:12.899999999999997px;background:#c4c4c4;"></div>
<div style="left:410.1px;top:237.3px;width:1px;height:12.899999999999997px;background:#c4c4c4;"></div>
<div style="left:455.5px;top:237.3px;width:1px;height:12.899999999999997px;background:#c4c4c4;"></div>
<div style="left:509.0px;top:237.3px;width:1px;height:12.899999999999997px;background:#c4c4c4;"></div>
<div style="left:544.0px;top:237.3px;width:1px;height:12.899999999999997px;background:#c4c4c4;"></div>
<div style="left:595.0px;top:237.3px;width:1px;height:12.899999999999997px;background:#c4c4c4;"></div>
<div style="left:25px;top:240.45px;width:6.9px;height:6.9px;background:#fff;border:1px solid #8c8c8c;"></div>
<div class="t" style="left:47.5px;top:244.85px;">10.Receive and analyze costumer feedback</div>
<div style="left:354px;top:239.75px;width:9px;height:9px;background:radial-gradient(circle,#fff 0,#ffe8c8 18%,#f08a20 35%,#d06010 70%,transparent 72%);"></div>
<div class="t" style="left:366px;top:244.85px;">Normal</div>
<div class="t" style="left:415px;top:243.85px;">30.08.2015</div>
<div class="t" style="left:476px;top:244.85px;">0 %</div>
<div class="t" style="left:546px;top:244.85px;width:47.5px;overflow:hidden;letter-spacing:0.3px;">6.01.2009 21:05</div>
<svg style="position:absolute;left:597.5px;top:239.75px;" width="10" height="8" viewBox="0 0 20 16"><defs><linearGradient id="rk" x1="0" y1="1" x2="1" y2="0"><stop offset="0" stop-color="#2040a8"/><stop offset=".6" stop-color="#5880d8"/><stop offset="1" stop-color="#8fb0f0"/></linearGradient></defs><path d="M0.5 15.5 L8 8 Q11 2 19.5 0.5 Q18.5 7 12.5 10.5 Z" fill="url(#rk)"/><path d="M8.5 9.5 L13 4.5" stroke="#e8f0ff" stroke-width="1.2"/></svg>
<div class="t" style="left:610px;top:244.85px;width:20px;overflow:hidden;letter-spacing:0.2px;">3.Launching</div>
<div style="left:12px;top:250.20000000000002px;width:619.7px;height:12.899999999999997px;background:#fff;border-top:1px solid #c4c4c4;"></div>
<div style="left:44.5px;top:250.20000000000002px;width:1px;height:12.899999999999997px;background:#c4c4c4;"></div>
<div style="left:309.9px;top:250.20000000000002px;width:1px;height:12.899999999999997px;background:#c4c4c4;"></div>
<div style="left:351.1px;top:250.20000000000002px;width:1px;height:12.899999999999997px;background:#c4c4c4;"></div>
<div style="left:410.1px;top:250.20000000000002px;width:1px;height:12.899999999999997px;background:#c4c4c4;"></div>
<div style="left:455.5px;top:250.20000000000002px;width:1px;height:12.899999999999997px;background:#c4c4c4;"></div>
<div style="left:509.0px;top:250.20000000000002px;width:1px;height:12.899999999999997px;background:#c4c4c4;"></div>
<div style="left:544.0px;top:250.20000000000002px;width:1px;height:12.899999999999997px;background:#c4c4c4;"></div>
<div style="left:595.0px;top:250.20000000000002px;width:1px;height:12.899999999999997px;background:#c4c4c4;"></div>
<div style="left:25px;top:253.35000000000002px;width:6.9px;height:6.9px;background:#fff;border:1px solid #8c8c8c;"></div>
<div class="t" style="left:47.5px;top:257.75000000000006px;">11.Map out marketing</div>
<div style="left:354px;top:252.65000000000003px;width:9px;height:9px;background:radial-gradient(circle,#fff 0,#ffe8c8 18%,#f08a20 35%,#d06010 70%,transparent 72%);"></div>
<div class="t" style="left:366px;top:257.75000000000006px;">Normal</div>
<div class="t" style="left:415px;top:256.75000000000006px;">30.08.2015</div>
<div class="t" style="left:476px;top:257.75000000000006px;">0 %</div>
<div class="t" style="left:546px;top:257.75000000000006px;width:47.5px;overflow:hidden;letter-spacing:0.3px;">6.01.2009 21:05</div>
<svg style="position:absolute;left:597.5px;top:252.65000000000003px;" width="10" height="8" viewBox="0 0 20 16"><defs><linearGradient id="rk" x1="0" y1="1" x2="1" y2="0"><stop offset="0" stop-color="#2040a8"/><stop offset=".6" stop-color="#5880d8"/><stop offset="1" stop-color="#8fb0f0"/></linearGradient></defs><path d="M0.5 15.5 L8 8 Q11 2 19.5 0.5 Q18.5 7 12.5 10.5 Z" fill="url(#rk)"/><path d="M8.5 9.5 L13 4.5" stroke="#e8f0ff" stroke-width="1.2"/></svg>
<div class="t" style="left:610px;top:257.75000000000006px;width:20px;overflow:hidden;letter-spacing:0.2px;">3.Launching</div>
<div style="left:12px;top:263.1px;width:619.7px;height:12.899999999999997px;background:#fff;border-top:1px solid #c4c4c4;"></div>
<div style="left:44.5px;top:263.1px;width:1px;height:12.899999999999997px;background:#c4c4c4;"></div>
<div style="left:309.9px;top:263.1px;width:1px;height:12.899999999999997px;background:#c4c4c4;"></div>
<div style="left:351.1px;top:263.1px;width:1px;height:12.899999999999997px;background:#c4c4c4;"></div>
<div style="left:410.1px;top:263.1px;width:1px;height:12.899999999999997px;background:#c4c4c4;"></div>
<div style="left:455.5px;top:263.1px;width:1px;height:12.899999999999997px;background:#c4c4c4;"></div>
<div style="left:509.0px;top:263.1px;width:1px;height:12.899999999999997px;background:#c4c4c4;"></div>
<div style="left:544.0px;top:263.1px;width:1px;height:12.899999999999997px;background:#c4c4c4;"></div>
<div style="left:595.0px;top:263.1px;width:1px;height:12.899999999999997px;background:#c4c4c4;"></div>
<div style="left:25px;top:266.25px;width:6.9px;height:6.9px;background:#fff;border:1px solid #8c8c8c;"></div>
<div class="t" style="left:47.5px;top:270.65000000000003px;">12.Launch product</div>
<div style="left:354px;top:265.55px;width:9px;height:9px;background:radial-gradient(circle,#fff 0,#ffe8c8 18%,#f08a20 35%,#d06010 70%,transparent 72%);"></div>
<div class="t" style="left:366px;top:270.65000000000003px;">Normal</div>
<div class="t" style="left:415px;top:269.65000000000003px;">30.08.2015</div>
<div class="t" style="left:476px;top:270.65000000000003px;">0 %</div>
<div class="t" style="left:546px;top:270.65000000000003px;width:47.5px;overflow:hidden;letter-spacing:0.3px;">6.01.2009 21:05</div>
<svg style="position:absolute;left:597.5px;top:265.55px;" width="10" height="8" viewBox="0 0 20 16"><defs><linearGradient id="rk" x1="0" y1="1" x2="1" y2="0"><stop offset="0" stop-color="#2040a8"/><stop offset=".6" stop-color="#5880d8"/><stop offset="1" stop-color="#8fb0f0"/></linearGradient></defs><path d="M0.5 15.5 L8 8 Q11 2 19.5 0.5 Q18.5 7 12.5 10.5 Z" fill="url(#rk)"/><path d="M8.5 9.5 L13 4.5" stroke="#e8f0ff" stroke-width="1.2"/></svg>
<div class="t" style="left:610px;top:270.65000000000003px;width:20px;overflow:hidden;letter-spacing:0.2px;">3.Launching</div>
<div style="left:12px;top:276.0px;width:619.7px;height:12.899999999999997px;background:#fff;border-top:1px solid #c4c4c4;"></div>
<div style="left:44.5px;top:276.0px;width:1px;height:12.899999999999997px;background:#c4c4c4;"></div>
<div style="left:309.9px;top:276.0px;width:1px;height:12.899999999999997px;background:#c4c4c4;"></div>
<div style="left:351.1px;top:276.0px;width:1px;height:12.899999999999997px;background:#c4c4c4;"></div>
<div style="left:410.1px;top:276.0px;width:1px;height:12.899999999999997px;background:#c4c4c4;"></div>
<div style="left:455.5px;top:276.0px;width:1px;height:12.899999999999997px;background:#c4c4c4;"></div>
<div style="left:509.0px;top:276.0px;width:1px;height:12.899999999999997px;background:#c4c4c4;"></div>
<div style="left:544.0px;top:276.0px;width:1px;height:12.899999999999997px;background:#c4c4c4;"></div>
<div style="left:595.0px;top:276.0px;width:1px;height:12.899999999999997px;background:#c4c4c4;"></div>
<div style="left:25px;top:279.15px;width:6.9px;height:6.9px;background:#fff;border:1px solid #8c8c8c;"></div>
<div class="t" style="left:47.5px;top:283.55px;">13.Provide product support</div>
<div style="left:354px;top:278.45px;width:9px;height:9px;background:radial-gradient(circle,#fff 0,#ffe8c8 18%,#f08a20 35%,#d06010 70%,transparent 72%);"></div>
<div class="t" style="left:366px;top:283.55px;">Normal</div>
<div class="t" style="left:415px;top:282.55px;">30.08.2015</div>
<div class="t" style="left:476px;top:283.55px;">0 %</div>
<div class="t" style="left:546px;top:283.55px;width:47.5px;overflow:hidden;letter-spacing:0.3px;">6.01.2009 21:05</div>
<svg style="position:absolute;left:597.5px;top:278.45px;" width="10" height="8" viewBox="0 0 20 16"><defs><linearGradient id="rk" x1="0" y1="1" x2="1" y2="0"><stop offset="0" stop-color="#2040a8"/><stop offset=".6" stop-color="#5880d8"/><stop offset="1" stop-color="#8fb0f0"/></linearGradient></defs><path d="M0.5 15.5 L8 8 Q11 2 19.5 0.5 Q18.5 7 12.5 10.5 Z" fill="url(#rk)"/><path d="M8.5 9.5 L13 4.5" stroke="#e8f0ff" stroke-width="1.2"/></svg>
<div class="t" style="left:610px;top:283.55px;width:20px;overflow:hidden;letter-spacing:0.2px;">3.Launching</div>
<div style="left:12px;top:288.9px;width:619.7px;height:12.899999999999997px;background:#fff;border-top:1px solid #c4c4c4;"></div>
<div style="left:44.5px;top:288.9px;width:1px;height:12.899999999999997px;background:#c4c4c4;"></div>
<div style="left:309.9px;top:288.9px;width:1px;height:12.899999999999997px;background:#c4c4c4;"></div>
<div style="left:351.1px;top:288.9px;width:1px;height:12.899999999999997px;background:#c4c4c4;"></div>
<div style="left:410.1px;top:288.9px;width:1px;height:12.899999999999997px;background:#c4c4c4;"></div>
<div style="left:455.5px;top:288.9px;width:1px;height:12.899999999999997px;background:#c4c4c4;"></div>
<div style="left:509.0px;top:288.9px;width:1px;height:12.899999999999997px;background:#c4c4c4;"></div>
<div style="left:544.0px;top:288.9px;width:1px;height:12.899999999999997px;background:#c4c4c4;"></div>
<div style="left:595.0px;top:288.9px;width:1px;height:12.899999999999997px;background:#c4c4c4;"></div>
<div style="left:25px;top:292.04999999999995px;width:6.9px;height:6.9px;background:#fff;border:1px solid #8c8c8c;"></div>
<div class="t" style="left:47.5px;top:296.45px;">8.Conduct consumer testing</div>
<div style="left:354px;top:291.34999999999997px;width:9px;height:9px;background:radial-gradient(circle,#fff 0,#ffe8c8 18%,#f08a20 35%,#d06010 70%,transparent 72%);"></div>
<div class="t" style="left:366px;top:296.45px;">Normal</div>
<div class="t" style="left:415px;top:295.45px;">30.08.2015</div>
<div class="t" style="left:476px;top:296.45px;">0 %</div>
<div class="t" style="left:546px;top:296.45px;width:47.5px;overflow:hidden;letter-spacing:0.3px;">6.01.2009 21:05</div>
<svg style="position:absolute;left:597.5px;top:291.34999999999997px;" width="10" height="8" viewBox="0 0 20 16"><defs><linearGradient id="rk" x1="0" y1="1" x2="1" y2="0"><stop offset="0" stop-color="#2040a8"/><stop offset=".6" stop-color="#5880d8"/><stop offset="1" stop-color="#8fb0f0"/></linearGradient></defs><path d="M0.5 15.5 L8 8 Q11 2 19.5 0.5 Q18.5 7 12.5 10.5 Z" fill="url(#rk)"/><path d="M8.5 9.5 L13 4.5" stroke="#e8f0ff" stroke-width="1.2"/></svg>
<div class="t" style="left:610px;top:296.45px;width:20px;overflow:hidden;letter-spacing:0.2px;">3.Launching</div>
<div style="left:12px;top:301.8px;width:619.7px;height:12.899999999999997px;background:#fff;border-top:1px solid #c4c4c4;"></div>
<div style="left:44.5px;top:301.8px;width:1px;height:12.899999999999997px;background:#c4c4c4;"></div>
<div style="left:309.9px;top:301.8px;width:1px;height:12.899999999999997px;background:#c4c4c4;"></div>
<div style="left:351.1px;top:301.8px;width:1px;height:12.899999999999997px;background:#c4c4c4;"></div>
<div style="left:410.1px;top:301.8px;width:1px;height:12.899999999999997px;background:#c4c4c4;"></div>
<div style="left:455.5px;top:301.8px;width:1px;height:12.899999999999997px;background:#c4c4c4;"></div>
<div style="left:509.0px;top:301.8px;width:1px;height:12.899999999999997px;background:#c4c4c4;"></div>
<div style="left:544.0px;top:301.8px;width:1px;height:12.899999999999997px;background:#c4c4c4;"></div>
<div style="left:595.0px;top:301.8px;width:1px;height:12.899999999999997px;background:#c4c4c4;"></div>
<div style="left:25px;top:304.95px;width:6.9px;height:6.9px;background:#fff;border:1px solid #8c8c8c;"></div>
<div class="t" style="left:47.5px;top:309.35px;">9.Make amendment to project specification</div>
<div style="left:354px;top:304.25px;width:9px;height:9px;background:radial-gradient(circle,#fff 0,#ffe8c8 18%,#f08a20 35%,#d06010 70%,transparent 72%);"></div>
<div class="t" style="left:366px;top:309.35px;">Normal</div>
<div class="t" style="left:415px;top:308.35px;">30.08.2015</div>
<div class="t" style="left:476px;top:309.35px;">0 %</div>
<div class="t" style="left:546px;top:309.35px;width:47.5px;overflow:hidden;letter-spacing:0.3px;">6.01.2009 21:05</div>
<svg style="position:absolute;left:597.5px;top:304.25px;" width="10" height="8" viewBox="0 0 20 16"><defs><linearGradient id="rk" x1="0" y1="1" x2="1" y2="0"><stop offset="0" stop-color="#2040a8"/><stop offset=".6" stop-color="#5880d8"/><stop offset="1" stop-color="#8fb0f0"/></linearGradient></defs><path d="M0.5 15.5 L8 8 Q11 2 19.5 0.5 Q18.5 7 12.5 10.5 Z" fill="url(#rk)"/><path d="M8.5 9.5 L13 4.5" stroke="#e8f0ff" stroke-width="1.2"/></svg>
<div class="t" style="left:610px;top:309.35px;width:20px;overflow:hidden;letter-spacing:0.2px;">3.Launching</div>
<div style="left:1px;top:314.7px;width:630.7px;height:14.0px;background:#d4d0c8;border-top:1px solid #b0b0b0;border-bottom:1px solid #a0a0a0;"></div>
<div style="left:11.2px;top:237.3px;width:1px;height:90.39999999999998px;background:#808080;"></div>
<div style="left:1px;top:237.3px;width:10.2px;height:90.39999999999998px;background:#d4d0c8;"></div>
<div style="left:1px;top:443.3px;width:630.2px;height:14.7px;background:#d4d0c8;border-top:1px solid #a0a0a0;border-right:1px solid #a09c94;border-bottom:1px solid #a09c94;"></div>
<div style="left:47.3px;top:445.3px;width:262px;height:11.4px;background:#d4d0c8;border:1px solid;border-color:#a09c94 #f0eee8 #f0eee8 #a09c94;"></div>
<div class="t" style="left:48.7px;top:451.5px;font-size:6.6px;">Count: 13</div>
<div style="left:631.7px;top:41px;width:2.3px;height:559px;background:#d4d0c8;"></div>
<div style="left:632px;top:56px;width:1px;height:388px;background:#a0a0a0;"></div>
<div style="left:2px;top:460.5px;width:628.7px;height:10.3px;background:#d4d0c8;border:1px solid #b0aca4;border-radius:1px;"></div>
<div class="t" style="left:4px;top:465.7px;">Note</div>
<svg style="position:absolute;left:614.3px;top:462.5px;" width="5" height="6" viewBox="0 0 10 12"><path d="M3 1h4v6h2v2H6v3H4V9H1V7h2z" fill="#000"/></svg>
<svg style="position:absolute;left:623px;top:462.5px;" width="5" height="6" viewBox="0 0 10 12"><path d="M1 1L9 11M9 1L1 11" stroke="#404040" stroke-width="1.2"/></svg>
<div style="left:2px;top:472.2px;width:628.5px;height:100.8px;background:#fff;border:1px solid #a0a0a0;"></div>
<div style="left:0px;top:574.5px;width:631px;height:12px;background:#f5f2ea;"></div>
<div style="left:4.4px;top:573px;width:19.3px;height:13.5px;background:#d4d0c8;border-right:1px solid #404040;border-bottom:1px solid #404040;"></div>
<div class="t" style="left:6.5px;top:580.8px;font-size:6.5px;">Note</div>
<div class="t" style="left:26px;top:580.8px;font-size:6.5px;color:#808080;">Search result</div>
<div style="left:68.5px;top:575px;width:1px;height:9px;background:#808080;"></div>
<div style="left:0px;top:586.5px;width:800px;height:2px;background:#c8c4bc;"></div>
<div style="left:0px;top:588.5px;width:800px;height:11.5px;background:#d4d0c8;border-top:1px solid #aca89f;border-bottom:1px solid #8c8c8c;"></div>
<div style="left:634px;top:41.7px;width:165.5px;height:10.0px;background:#d4d0c8;border:1px solid #aca89f;border-radius:1px;"></div>
<div class="t" style="left:636px;top:47.0px;">Categories Bar</div>
<svg style="position:absolute;left:773px;top:44.2px;" width="5" height="5" viewBox="0 0 10 10"><rect x="1" y="1" width="8" height="8" rx="1.5" fill="none" stroke="#202020" stroke-width="1.6"/></svg>
<svg style="position:absolute;left:782px;top:44.2px;" width="4.5" height="5.5" viewBox="0 0 9 11"><path d="M1.5 0h6v7h1.5v1.5H6L4.5 11L3 8.5H0V7h1.5z" fill="#000"/></svg>
<svg style="position:absolute;left:790px;top:44.2px;" width="5" height="5" viewBox="0 0 10 10"><path d="M1 1L9 9M9 1L1 9" stroke="#505050" stroke-width="1.1"/></svg>
<div style="left:634px;top:53.3px;width:165px;height:185px;background:#fff;border:1px solid #a0a0a0;"></div>
<div style="left:634.5px;top:53.5px;width:164px;height:11.3px;background:#d4d0c8;border:1px solid #303030;border-right-color:#606060;"></div>
<div style="left:771.5px;top:54px;width:1px;height:10px;background:#303030;"></div>
<div style="left:785px;top:54px;width:1px;height:10px;background:#303030;"></div>
<div class="t" style="left:774.5px;top:59.3px;font-size:6.5px;letter-spacing:.3px;">J...</div>
<div class="t" style="left:787.5px;top:59.3px;font-size:6.5px;letter-spacing:.3px;">&#1043;...</div>
<div style="left:640px;top:73px;width:1px;height:0px;"></div>
<div style="left:652.3px;top:74px;width:0px;height:48px;border-left:1px solid #d0d0d0;"></div>
<div style="left:664.3px;top:85px;width:0px;height:27px;border-left:1px solid #d0d0d0;"></div>
<div style="left:664.3px;top:91px;width:6px;height:0px;border-top:1px solid #d0d0d0;"></div>
<div style="left:664.3px;top:101px;width:6px;height:0px;border-top:1px solid #d0d0d0;"></div>
<div style="left:664.3px;top:111.5px;width:6px;height:0px;border-top:1px solid #d0d0d0;"></div>
<div style="left:652.3px;top:122px;width:6px;height:0px;border-top:1px solid #d0d0d0;"></div>
<div style="left:642.8px;top:69.3px;width:3px;height:0px;border-top:1px solid #d0d0d0;"></div>
<div style="left:654.7px;top:80px;width:3px;height:0px;border-top:1px solid #d0d0d0;"></div>
<div style="left:637.2px;top:66.75px;width:5.6px;height:5.2px;background:#fff;border:1px solid #a0a0a0;"></div>
<div style="left:638.5px;top:68.95px;width:3px;height:0.9px;background:#303030;"></div>
<svg style="position:absolute;left:646.5px;top:66.7px;" width="10" height="7" viewBox="0 0 20 14"><path d="M1 1h6l1 2h9v10H1z" fill="#e8c040" stroke="#c8a020" stroke-width=".8"/><path d="M4 6h16l-4 8H0z" fill="#f8dc60" stroke="#d8b030" stroke-width=".8"/></svg>
<svg style="position:absolute;left:660px;top:66.4px;" width="10" height="7" viewBox="0 0 20 14"><path d="M10 3 Q5 -1 1 2 L2 12 Q6 10 10 13 Z" fill="#f4f8fc" stroke="#e89a70" stroke-width="1.2"/><path d="M10 3 Q15 -1 19 2 L18 12 Q14 10 10 13 Z" fill="#f4f8fc" stroke="#e89a70" stroke-width="1.2"/><path d="M7 5 L10 12 L13 5 L10 8Z" fill="#5888d8"/></svg>
<div class="t" style="left:671.7px;top:69.9px;font-size:6.6px;color:#202020;">Research Scientist's Solution</div>
<div class="t" style="left:778px;top:69.9px;font-size:6.6px;color:#202020;">18</div>
<div class="t" style="left:789px;top:69.9px;font-size:6.6px;color:#202020;">18</div>
<div style="left:649px;top:77px;width:5.6px;height:5.2px;background:#fff;border:1px solid #a0a0a0;"></div>
<div style="left:650.3px;top:79.2px;width:3px;height:0.9px;background:#303030;"></div>
<svg style="position:absolute;left:658.4px;top:77.2px;" width="10" height="7" viewBox="0 0 20 14"><path d="M1 1h6l1 2h9v10H1z" fill="#e8c040" stroke="#c8a020" stroke-width=".8"/><path d="M4 6h16l-4 8H0z" fill="#f8dc60" stroke="#d8b030" stroke-width=".8"/></svg>
<div style="left:670px;top:75.2px;width:103px;height:10.2px;background:#fff;border:1px solid #202020;"></div>
<div style="left:772.7px;top:75.2px;width:25.3px;height:10.2px;background:#d4d0c8;"></div>
<svg style="position:absolute;left:672px;top:77px;" width="10" height="7" viewBox="0 0 20 14"><path d="M10 3 Q5 -1 1 2 L2 12 Q6 10 10 13 Z" fill="#f4f8fc" stroke="#e89a70" stroke-width="1.2"/><path d="M10 3 Q15 -1 19 2 L18 12 Q14 10 10 13 Z" fill="#f4f8fc" stroke="#e89a70" stroke-width="1.2"/><path d="M7 5 L10 12 L13 5 L10 8Z" fill="#5888d8"/></svg>
<div class="t" style="left:685px;top:80.5px;font-weight:bold;font-size:7.5px;">New product R&amp;D</div>
<div class="t" style="left:776.5px;top:80.5px;font-weight:bold;font-size:7.5px;">13</div>
<div class="t" style="left:788px;top:80.5px;font-weight:bold;font-size:7.5px;">13</div>
<svg style="position:absolute;left:671px;top:87px;" width="11" height="8" viewBox="0 0 22 16"><path d="M1 16 Q1 11 6 11 Q11 11 11 16Z" fill="#2f5fd0"/><circle cx="6" cy="6" r="4.6" fill="#eeb040" stroke="#c88820" stroke-width=".6"/><path d="M9 16 Q9 11 14.5 11 Q20 11 20 16Z" fill="#40b848"/><circle cx="14.5" cy="6" r="4.6" fill="#a85a28" stroke="#703010" stroke-width=".6"/><circle cx="14.5" cy="6.8" r="2.6" fill="#d08040"/></svg>
<div class="t" style="left:685px;top:91.2px;font-weight:bold;font-size:7.5px;">1.Developing new produ</div>
<div class="t" style="left:781px;top:91.2px;font-weight:bold;font-size:7.5px;">4</div>
<div class="t" style="left:792px;top:91.2px;font-weight:bold;font-size:7.5px;">4</div>
<svg style="position:absolute;left:672px;top:96.5px;" width="9" height="8.5" viewBox="0 0 18 17"><rect x="0" y="0" width="2.2" height="17" fill="#3c4468"/><path d="M2 1 Q6 -1 9 2 Q13 4 17 1 V10 Q13 13 9 11 Q6 8 2 10 Z" fill="#7c84ea" stroke="#4850b0" stroke-width=".8"/></svg>
<div class="t" style="left:685px;top:101.5px;font-weight:bold;font-size:7.5px;">2.Prototyping</div>
<div class="t" style="left:781px;top:101.5px;font-weight:bold;font-size:7.5px;">3</div>
<div class="t" style="left:792px;top:101.5px;font-weight:bold;font-size:7.5px;">3</div>
<svg style="position:absolute;left:672px;top:107.5px;" width="10" height="8" viewBox="0 0 20 16"><defs><linearGradient id="rk" x1="0" y1="1" x2="1" y2="0"><stop offset="0" stop-color="#2040a8"/><stop offset=".6" stop-color="#5880d8"/><stop offset="1" stop-color="#8fb0f0"/></linearGradient></defs><path d="M0.5 15.5 L8 8 Q11 2 19.5 0.5 Q18.5 7 12.5 10.5 Z" fill="url(#rk)"/><path d="M8.5 9.5 L13 4.5" stroke="#e8f0ff" stroke-width="1.2"/></svg>
<div class="t" style="left:685px;top:112px;font-weight:bold;font-size:7.5px;">3.Launching product</div>
<div class="t" style="left:781px;top:112px;font-weight:bold;font-size:7.5px;">6</div>
<div class="t" style="left:792px;top:112px;font-weight:bold;font-size:7.5px;">6</div>
<svg style="position:absolute;left:659px;top:118px;" width="11" height="8" viewBox="0 0 22 16"><path d="M1 16 Q1 11 6 11 Q11 11 11 16Z" fill="#2f5fd0"/><circle cx="6" cy="6" r="4.6" fill="#eeb040" stroke="#c88820" stroke-width=".6"/><path d="M9 16 Q9 11 14.5 11 Q20 11 20 16Z" fill="#40b848"/><circle cx="14.5" cy="6" r="4.6" fill="#a85a28" stroke="#703010" stroke-width=".6"/><circle cx="14.5" cy="6.8" r="2.6" fill="#d08040"/></svg>
<div class="t" style="left:671.7px;top:122.3px;font-size:6.6px;color:#202020;">Current Projects</div>
<div style="left:634px;top:241px;width:165.5px;height:10.699999999999989px;background:#d4d0c8;border:1px solid #aca89f;border-radius:1px;"></div>
<div class="t" style="left:636px;top:246.65px;">Filters Bar</div>
<svg style="position:absolute;left:773px;top:243.85px;" width="5" height="5" viewBox="0 0 10 10"><rect x="1" y="1" width="8" height="8" rx="1.5" fill="none" stroke="#202020" stroke-width="1.6"/></svg>
<svg style="position:absolute;left:782px;top:243.85px;" width="4.5" height="5.5" viewBox="0 0 9 11"><path d="M1.5 0h6v7h1.5v1.5H6L4.5 11L3 8.5H0V7h1.5z" fill="#000"/></svg>
<svg style="position:absolute;left:790px;top:243.85px;" width="5" height="5" viewBox="0 0 10 10"><path d="M1 1L9 9M9 1L1 9" stroke="#505050" stroke-width="1.1"/></svg>
<div style="left:634px;top:253px;width:165px;height:164.3px;background:#d4d0c8;border:1px solid;border-color:#a0a0a0 #c8c4bc #b0aca4 #a0a0a0;"></div>
<div style="left:634.5px;top:253.5px;width:164px;height:123.69999999999999px;border:1px solid #a0a0a0;border-left-color:#808080;"></div>
<div class="t" style="left:645.7px;top:260.935px;font-size:6.6px;color:#202020;">Completion</div>
<div style="left:789.3px;top:258.935px;width:0;height:0;border-left:2.6px solid transparent;border-right:2.6px solid transparent;border-top:3px solid #000;"></div>
<div style="left:635px;top:266.27px;width:163px;height:1px;background:repeating-linear-gradient(to right,#b8b4ac 0 2px,transparent 2px 3px);"></div>
<div class="t" style="left:645.7px;top:273.205px;font-size:6.6px;color:#202020;">Due Date</div>
<div style="left:789.3px;top:271.205px;width:0;height:0;border-left:2.6px solid transparent;border-right:2.6px solid transparent;border-top:3px solid #000;"></div>
<div style="left:635px;top:278.54px;width:163px;height:1px;background:repeating-linear-gradient(to right,#b8b4ac 0 2px,transparent 2px 3px);"></div>
<div class="t" style="left:645.7px;top:285.475px;font-size:6.6px;color:#202020;">Status</div>
<div style="left:789.3px;top:283.475px;width:0;height:0;border-left:2.6px solid transparent;border-right:2.6px solid transparent;border-top:3px solid #000;"></div>
<div style="left:635px;top:290.81px;width:163px;height:1px;background:repeating-linear-gradient(to right,#b8b4ac 0 2px,transparent 2px 3px);"></div>
<div class="t" style="left:645.7px;top:297.745px;font-size:6.6px;color:#202020;">Priority</div>
<div style="left:789.3px;top:295.745px;width:0;height:0;border-left:2.6px solid transparent;border-right:2.6px solid transparent;border-top:3px solid #000;"></div>
<div style="left:635px;top:303.08px;width:163px;height:1px;background:repeating-linear-gradient(to right,#b8b4ac 0 2px,transparent 2px 3px);"></div>
<div class="t" style="left:645.7px;top:310.015px;font-size:6.6px;color:#202020;">Assignments</div>
<div style="left:789.3px;top:308.015px;width:0;height:0;border-left:2.6px solid transparent;border-right:2.6px solid transparent;border-top:3px solid #000;"></div>
<div style="left:635px;top:315.35px;width:163px;height:1px;background:repeating-linear-gradient(to right,#b8b4ac 0 2px,transparent 2px 3px);"></div>
<div class="t" style="left:645.7px;top:322.285px;font-size:6.6px;color:#202020;">Task Name</div>
<div style="left:635px;top:327.62px;width:163px;height:1px;background:repeating-linear-gradient(to right,#b8b4ac 0 2px,transparent 2px 3px);"></div>
<div class="t" style="left:645.7px;top:334.555px;font-size:6.6px;color:#202020;">Date Created</div>
<div style="left:789.3px;top:332.555px;width:0;height:0;border-left:2.6px solid transparent;border-right:2.6px solid transparent;border-top:3px solid #000;"></div>
<div style="left:635px;top:339.89px;width:163px;height:1px;background:repeating-linear-gradient(to right,#b8b4ac 0 2px,transparent 2px 3px);"></div>
<div class="t" style="left:645.7px;top:346.825px;font-size:6.6px;color:#202020;">Date Last Modifi</div>
<div style="left:789.3px;top:344.825px;width:0;height:0;border-left:2.6px solid transparent;border-right:2.6px solid transparent;border-top:3px solid #000;"></div>
<div style="left:635px;top:352.15999999999997px;width:163px;height:1px;background:repeating-linear-gradient(to right,#b8b4ac 0 2px,transparent 2px 3px);"></div>
<div class="t" style="left:645.7px;top:359.09499999999997px;font-size:6.6px;color:#202020;">Date Opened</div>
<div style="left:789.3px;top:357.09499999999997px;width:0;height:0;border-left:2.6px solid transparent;border-right:2.6px solid transparent;border-top:3px solid #000;"></div>
<div style="left:635px;top:364.43px;width:163px;height:1px;background:repeating-linear-gradient(to right,#b8b4ac 0 2px,transparent 2px 3px);"></div>
<div class="t" style="left:645.7px;top:371.365px;font-size:6.6px;color:#202020;">Date Completed</div>
<div style="left:789.3px;top:369.365px;width:0;height:0;border-left:2.6px solid transparent;border-right:2.6px solid transparent;border-top:3px solid #000;"></div>
<div style="left:696px;top:253.5px;width:1px;height:123.19999999999999px;background:#a0a0a0;"></div>
<div style="left:634px;top:420.7px;width:165.5px;height:10.0px;background:#d4d0c8;border:1px solid #aca89f;border-radius:1px;"></div>
<div class="t" style="left:636px;top:426.0px;">Resource Assignment Bar</div>
<svg style="position:absolute;left:773px;top:423.2px;" width="5" height="5" viewBox="0 0 10 10"><rect x="1" y="1" width="8" height="8" rx="1.5" fill="none" stroke="#202020" stroke-width="1.6"/></svg>
<svg style="position:absolute;left:782px;top:423.2px;" width="4.5" height="5.5" viewBox="0 0 9 11"><path d="M1.5 0h6v7h1.5v1.5H6L4.5 11L3 8.5H0V7h1.5z" fill="#000"/></svg>
<svg style="position:absolute;left:790px;top:423.2px;" width="5" height="5" viewBox="0 0 10 10"><path d="M1 1L9 9M9 1L1 9" stroke="#505050" stroke-width="1.1"/></svg>
<div style="left:634px;top:432px;width:165px;height:154.8px;background:#fff;border:1px solid #a0a0a0;border-bottom-color:#c0c0c0;"></div>
<div style="left:637px;top:434.8px;width:6.6px;height:6.4px;background:#fff;border:1px solid #a0a0a0;"></div>
<div style="left:637px;top:444.3px;width:6.6px;height:6.4px;background:#fff;border:1px solid #a0a0a0;"></div>
<div class="t" style="left:647.7px;top:439px;font-size:6.4px;">Employee 1</div>
<div class="t" style="left:647.7px;top:448.4px;font-size:6.4px;">Employee 2</div>
<div style="left:230.5px;top:204.5px;width:282.5px;height:241.5px;background:#d4d0c8;border:1px solid;border-color:#d4d0c8 #707070 #707070 #d4d0c8;box-shadow:inset 1px 1px 0 #fff, inset -1px -1px 0 #a0a0a0;"></div>
<div style="left:232.5px;top:206.3px;width:278px;height:10.4px;background:linear-gradient(to right,#0a246a,#a6caf0);"></div>
<div class="t" style="left:233.7px;top:211.5px;font-weight:bold;font-size:7.3px;color:#fff;">Edit Task</div>
<div style="left:499.3px;top:207.3px;width:10px;height:8px;background:#d4d0c8;border:1px solid;border-color:#fff #404040 #404040 #fff;"></div>
<svg style="position:absolute;left:501.5px;top:209px;" width="5.5" height="5" viewBox="0 0 11 10"><path d="M1.5 1L9.5 9M9.5 1L1.5 9" stroke="#000" stroke-width="1.8"/></svg>
<div style="left:237.7px;top:222.7px;width:267.6px;height:11.7px;background:#ece9e2;border-bottom:1px solid #404040;"></div>
<div class="t" style="left:244px;top:229.2px;font-size:6.5px;">General</div>
<div class="t" style="left:273px;top:229.2px;font-size:6.5px;">Reminder</div>
<div class="t" style="left:345.7px;top:229.2px;font-size:6.5px;">Hyperlink</div>
<div class="t" style="left:379.5px;top:229.2px;font-size:6.5px;">Note</div>
<div class="t" style="left:399.7px;top:229.2px;font-size:6.5px;">Info</div>
<div style="left:270.5px;top:224.5px;width:1px;height:8px;background:#a0a0a0;"></div>
<div style="left:376.5px;top:224.5px;width:1px;height:8px;background:#a0a0a0;"></div>
<div style="left:397.5px;top:224.5px;width:1px;height:8px;background:#a0a0a0;"></div>
<div style="left:304.5px;top:222px;width:37px;height:12.5px;background:#d4d0c8;border:1px solid #404040;border-bottom:none;box-shadow:inset 1px 1px 0 #fff;"></div>
<div class="t" style="left:307.5px;top:229.2px;font-size:6.5px;">Resources</div>
<div style="left:240.3px;top:241.3px;width:262.4px;height:170px;background:#fff;border:1px solid #808080;"></div>
<div style="left:240.3px;top:241.3px;width:262.4px;height:11.4px;background:#d4d0c8;border:1px solid #303030;"></div>
<div style="left:258.7px;top:241.5px;width:1px;height:11px;background:#303030;"></div>
<div style="left:340.5px;top:241.5px;width:1px;height:11px;background:#303030;"></div>
<div style="left:420px;top:241.5px;width:1px;height:11px;background:#303030;"></div>
<div class="t" style="left:259px;top:247px;width:81px;text-align:center;font-size:6.6px;">Name</div>
<div class="t" style="left:340.5px;top:247px;width:80px;text-align:center;font-size:6.6px;">EMail</div>
<div class="t" style="left:420px;top:247px;width:82px;text-align:center;font-size:6.6px;">Job Tiltle</div>
<div style="left:258.7px;top:262.7px;width:244px;height:9.6px;background:#0a246a;"></div>
<div style="left:241px;top:262.8px;width:18px;height:9.6px;border-top:1px dashed #a0a0a0;border-bottom:1px dashed #a0a0a0;"></div>
<div style="left:258.7px;top:262.8px;width:244px;height:9.6px;border-top:1px dashed #4060a8;border-bottom:1px dashed #4060a8;"></div>
<div style="left:246.1px;top:254.10000000000002px;width:6.9px;height:6.6px;background:#fff;border:1px solid #a0a0a0;"></div>
<svg style="position:absolute;left:247px;top:255.00000000000003px;" width="5" height="5" viewBox="0 0 10 10"><path d="M1 4.5 L4 7.5 L9 1.5" stroke="#000" stroke-width="2.6" fill="none"/></svg>
<div class="t" style="left:261px;top:257.6px;font-size:6.45px;color:#000;">Employee 1</div>
<div class="t" style="left:341.7px;top:257.6px;font-size:6.5px;color:#000;">Employee1@mail.com</div>
<div style="left:246.1px;top:264.0px;width:6.9px;height:6.6px;background:#fff;border:1px solid #a0a0a0;"></div>
<svg style="position:absolute;left:247px;top:264.9px;" width="5" height="5" viewBox="0 0 10 10"><path d="M1 4.5 L4 7.5 L9 1.5" stroke="#000" stroke-width="2.6" fill="none"/></svg>
<div class="t" style="left:261px;top:267.5px;font-size:6.45px;color:#fff;">Employee 2</div>
<div class="t" style="left:341.7px;top:267.5px;font-size:6.5px;color:#fff;">Employee2@mail.ru</div>
<div class="t" style="left:237px;top:429.5px;font-size:6.7px;color:#202020;">Hint: Use shortcut Ctrl+Tab to switch between</div>
<div class="t" style="left:237px;top:437.5px;font-size:6.7px;color:#202020;">pages</div>
<div style="left:399px;top:425.2px;width:47.2px;height:14.1px;background:#bcc7dd;border:1px solid #5a6e9e;"></div>
<svg style="position:absolute;left:411.5px;top:428.8px;" width="10" height="7" viewBox="0 0 20 14"><path d="M1.5 7 L6.5 12 L18 2" stroke="#2c9c3c" stroke-width="3.2" fill="none" stroke-linecap="round"/></svg>
<div class="t" style="left:424.8px;top:433px;font-size:6.7px;">Ok</div>
<div style="left:456.7px;top:425.2px;width:47.3px;height:14.1px;background:#d4d0c8;border:1px solid #404040;"></div>
<svg style="position:absolute;left:464.3px;top:428.3px;" width="8.5" height="8" viewBox="0 0 17 16"><path d="M2.5 2.5 L14.5 13.5 M14.5 2.5 L2.5 13.5" stroke="#e83820" stroke-width="3.6" stroke-linecap="round"/></svg>
<div class="t" style="left:476.7px;top:433px;font-size:6.6px;">Cancel</div>
<div style="left:417.7px;top:439.3px;width:32.3px;height:10.9px;background:#ffffe1;box-shadow:1px 1px 1px #808080;"></div>
</body></html>
